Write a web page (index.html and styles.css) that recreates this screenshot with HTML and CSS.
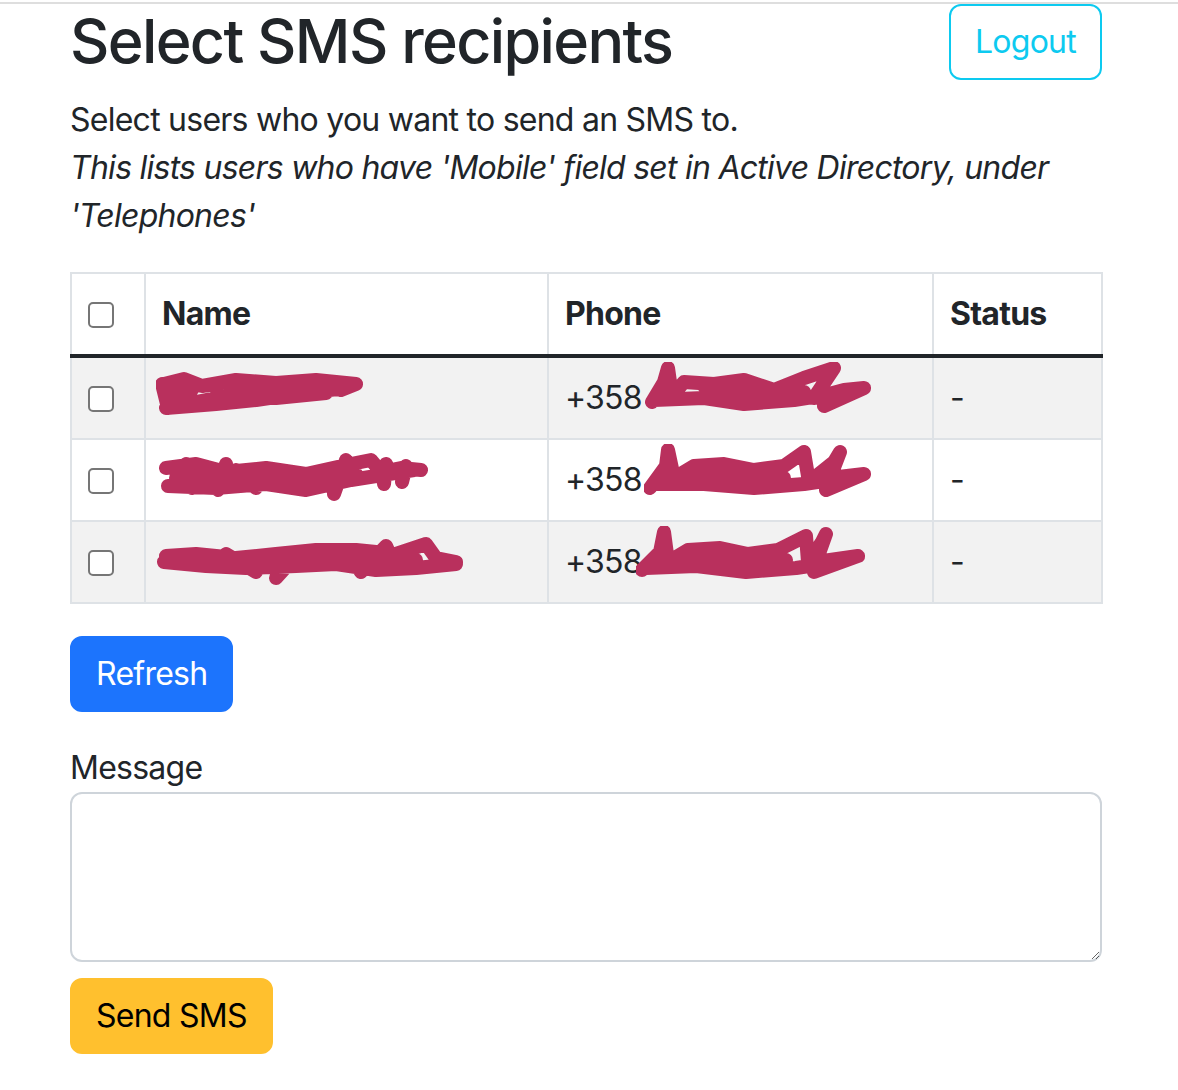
FILE: index.html
```html
<!DOCTYPE html>
<html lang="en">
<head>
<meta charset="utf-8">
<title>Select SMS recipients</title>
<link rel="stylesheet" href="styles.css">
</head>
<body>
<div class="topline"></div>
<main class="container">
  <header class="header">
    <h1 class="title">Select SMS recipients</h1>
    <button class="btn btn-outline-info" type="button">Logout</button>
  </header>
  <p class="lead-text">Select users who you want to send an SMS to.<br><i>This lists users who have 'Mobile' field set in Active Directory, under 'Telephones'</i></p>

  <table class="table">
    <colgroup>
      <col class="c-check"><col class="c-name"><col class="c-phone"><col class="c-status">
    </colgroup>
    <thead>
      <tr>
        <th><span class="check"></span></th>
        <th>Name</th>
        <th>Phone</th>
        <th>Status</th>
      </tr>
    </thead>
    <tbody>
      <tr class="odd">
        <td><span class="check"></span></td>
        <td><svg class="scrib" width="215" height="56" viewBox="0 0 215 56"><path d="M8 16 L28 11 L46 18 L80 12 L120 15 L160 12 L200 16 L185 22 M6 16 L12 40 L22 16 L28 38 L38 17 M10 40 L60 36 L100 32 L140 26 L190 20 M40 34 L90 24 L130 20 M60 28 L120 30 L170 25 L120 20"/></svg></td>
        <td>+358<svg class="scrib ph" width="235" height="56" viewBox="0 0 235 56"><path d="M8 40 L20 20 L24 6 L28 34 L40 20 L70 22 L100 18 L130 28 L160 16 L190 6 L170 36 L200 28 L220 26 L180 44 M10 38 L60 36 L100 42 L150 38 L200 30 M60 24 L110 34 L160 30 L100 30"/></svg></td>
        <td>-</td>
      </tr>
      <tr>
        <td><span class="check"></span></td>
        <td><svg class="scrib" width="280" height="56" viewBox="0 0 280 56"><path d="M10 18 L40 14 L70 22 L110 18 L150 24 L195 14 L215 10 L225 22 L245 18 L265 20 M12 36 L60 38 L110 34 L150 40 L195 30 L258 20 M30 14 L36 38 M70 14 L62 40 L80 20 L100 38 M190 10 L178 44 M230 14 L228 34 M250 16 L246 32 M20 28 L120 28 L200 24"/></svg></td>
        <td>+358<svg class="scrib ph" width="235" height="56" viewBox="0 0 235 56"><path d="M6 44 L22 22 L24 6 L30 34 L50 22 L80 20 L110 26 L140 22 L160 8 L165 38 L190 18 L196 8 L186 34 L220 30 L182 46 M10 40 L60 40 L110 44 L160 40 L200 34 M40 28 L90 34 L140 34 L70 32"/></svg></td>
        <td>-</td>
      </tr>
      <tr class="odd">
        <td><span class="check"></span></td>
        <td><svg class="scrib" width="315" height="56" viewBox="0 0 315 56"><path d="M10 24 L40 22 L80 26 L120 22 L160 18 L200 18 L240 22 L270 12 L280 26 L300 30 M8 30 L50 34 L90 36 L140 34 L180 32 L220 38 L260 36 L300 32 M70 22 L100 40 M140 24 L120 46 M190 18 L205 40 L230 14 L240 36 M30 28 L150 28 L260 28"/></svg></td>
        <td>+358<svg class="scrib ph3" width="235" height="56" viewBox="0 0 235 56"><path d="M6 44 L24 26 L28 6 L32 36 L52 24 L84 22 L112 28 L142 24 L170 10 L172 36 L186 16 L190 8 L180 36 L222 30 L178 46 M10 42 L60 40 L110 46 L160 42 L200 36 M46 30 L100 36 L150 34 L80 34"/></svg></td>
        <td>-</td>
      </tr>
    </tbody>
  </table>

  <button class="btn btn-primary" type="button">Refresh</button>

  <form class="form">
    <label class="label" for="msg">Message</label>
    <textarea id="msg" class="textarea" rows="3"></textarea>
    <button class="btn btn-warning" type="button">Send SMS</button>
  </form>
</main>
</body>
</html>
```

FILE: styles.css
```css
* { box-sizing: border-box; }

html, body {
  margin: 0;
  padding: 0;
  background: #fff;
}

body {
  font-family: Inter, "Liberation Sans", Arial, sans-serif;
  font-size: 32px;
  line-height: 48px;
  letter-spacing: -0.75px;
  color: #212529;
}

.topline {
  height: 2px;
  margin-top: 2px;
  background: #dedede;
}

.container {
  padding: 0 76px 0 70px;
}

.header {
  display: flex;
  justify-content: space-between;
  align-items: flex-start;
}

.title {
  margin: 0 0 18px;
  font-size: 61px;
  font-weight: 500;
  line-height: 74px;
  letter-spacing: -1.65px;
}

.lead-text {
  margin: 0 0 32px;
}

.btn {
  display: inline-block;
  font-family: inherit;
  font-size: 32px;
  line-height: 48px;
  letter-spacing: -0.75px;
  padding: 12px 24px;
  border: 2px solid transparent;
  border-radius: 12px;
  cursor: pointer;
}

.btn-outline-info {
  color: #0dcaf0;
  background: #fff;
  border-color: #0dcaf0;
}

.btn-primary {
  color: #fff;
  background: #1c74fd;
  border-color: #1c74fd;
}

.btn-warning {
  color: #000;
  background: #ffc02e;
  border-color: #ffc02e;
  margin-top: 16px;
}

.table {
  width: 1031px;
  table-layout: fixed;
  border-collapse: collapse;
  margin-bottom: 32px;
}

.c-check { width: 74px; }
.c-name { width: 403px; }
.c-phone { width: 385px; }
.c-status { width: 169px; }

.table th,
.table td {
  border: 2px solid #dee2e6;
  padding: 16px;
  text-align: left;
  vertical-align: top;
  white-space: nowrap;
}

.table th {
  font-weight: 700;
}

.table thead tr th {
  border-bottom: 4px solid #212529;
}

.table tbody tr.odd td {
  background: #f2f2f2;
}

.check {
  display: inline-block;
  width: 26px;
  height: 26px;
  border: 2px solid #767676;
  border-radius: 5px;
  background: #fff;
  vertical-align: -3px;
  margin-left: 0;
}

.scrib {
  display: inline-block;
  vertical-align: top;
  margin-top: -6px;
  margin-bottom: -2px;
  margin-left: -6px;
}

.scrib path {
  fill: none;
  stroke: #b9305d;
  stroke-width: 14;
  stroke-linecap: round;
  stroke-linejoin: round;
}

.scrib.ph { margin-left: 2px; margin-top: -12px; margin-bottom: -8px; }
.scrib.ph3 { margin-left: -6px; margin-top: -12px; margin-bottom: -8px; }

.form {
  margin-top: 32px;
}

.label {
  display: block;
}

.textarea {
  display: block;
  width: 100%;
  height: 170px;
  padding: 12px 24px;
  border: 2px solid #ced4da;
  border-radius: 12px;
  font-family: inherit;
  font-size: 32px;
  line-height: 48px;
  resize: vertical;
}
```
